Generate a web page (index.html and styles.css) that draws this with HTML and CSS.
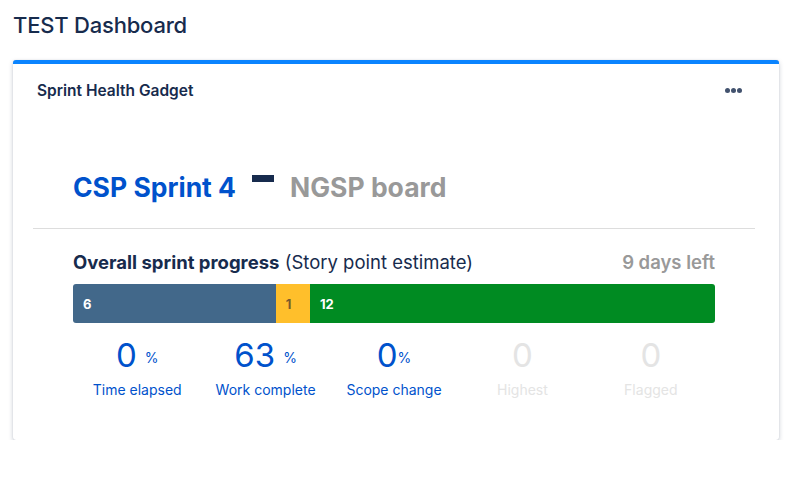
FILE: index.html
```html
<!DOCTYPE html>
<html lang="en">

<head>
    <meta charset="UTF-8">
    <meta name="viewport" content="width=device-width, initial-scale=1.0">
    <title>TEST Dashboard</title>
    <link rel="stylesheet" href="styles.css">
</head>

<body>
    <h1 class="page-title">TEST Dashboard</h1>

    <div class="gadget">
        <div class="gadget-head">
            <span class="gadget-title">Sprint Health Gadget</span>
            <span class="more">
                <i></i><i></i><i></i>
            </span>
        </div>

        <div class="sprint-name">
            <span class="sprint">CSP Sprint 4</span>
            <span class="dash"></span>
            <span class="board">NGSP board</span>
        </div>

        <div class="rule"></div>

        <div class="progress">
            <div class="progress-head">
                <div><b>Overall sprint progress</b> (Story point estimate)</div>
                <div class="days">9 days left</div>
            </div>

            <div class="bar">
                <div class="seg todo" style="width: 31.6%">6</div>
                <div class="seg inprog" style="width: 5.3%">1</div>
                <div class="seg done" style="width: 63.1%">12</div>
            </div>

            <div class="stats">
                <div class="stat">
                    <div class="num">0<sup>%</sup></div>
                    <div class="label">Time elapsed</div>
                </div>
                <div class="stat">
                    <div class="num">63<sup>%</sup></div>
                    <div class="label">Work complete</div>
                </div>
                <div class="stat">
                    <div class="num">0<sup class="tight">%</sup></div>
                    <div class="label">Scope change</div>
                </div>
                <div class="stat off">
                    <div class="num">0</div>
                    <div class="label">Highest</div>
                </div>
                <div class="stat off">
                    <div class="num">0</div>
                    <div class="label">Flagged</div>
                </div>
            </div>
        </div>
    </div>
</body>

</html>
```

FILE: styles.css
```css
* {
    padding: 0;
    margin: 0;
    box-sizing: border-box;
}

body {
    font-family: Inter, "Liberation Sans", sans-serif;
    color: #172b4d;
    background: #fff;
    padding: 12px 30px 0 13px;
}

.page-title {
    font-size: 22px;
    font-weight: 500;
    line-height: 26px;
    letter-spacing: -0.2px;
}

.gadget {
    margin-top: 22px;
    border-top: 4px solid #0a84ff;
    border-radius: 3px;
    background: #fff;
    box-shadow: 0 2px 5px rgba(9, 30, 66, 0.22), 0 0 1px rgba(9, 30, 66, 0.2);
    padding: 0 24px 41px 20px;
}

.gadget-head {
    display: flex;
    justify-content: space-between;
    align-items: center;
    height: 50px;
    padding-left: 4px;
    padding-top: 2px;
}

.gadget-title {
    font-size: 15.5px;
    font-weight: 600;
}

.more {
    display: flex;
    gap: 1px;
    margin-right: 13px;
}

.more i {
    width: 5px;
    height: 5px;
    border-radius: 50%;
    background: #42526e;
}

.sprint-name {
    display: flex;
    align-items: flex-start;
    padding: 57px 0 0 40px;
    height: 114px;
    font-size: 26.5px;
    line-height: 32px;
    font-weight: 700;
}

.sprint {
    color: #0052cc;
}

.dash {
    width: 22px;
    height: 7px;
    background: #172b4d;
    margin: 4px 16px 0 16px;
}

.board {
    color: #999;
}

.rule {
    height: 1px;
    background: #ddd;
}

.progress {
    padding: 22px 40px 0 40px;
}

.progress-head {
    display: flex;
    justify-content: space-between;
    font-size: 18.5px;
    line-height: 22px;
}

.progress-head b {
    font-weight: 700;
}

.days {
    color: #999;
    font-weight: 600;
}

.bar {
    display: flex;
    height: 39px;
    margin-top: 11px;
    border-radius: 3px;
    overflow: hidden;
    font-size: 13px;
    font-weight: 700;
    color: #fff;
}

.seg {
    display: flex;
    align-items: center;
    padding-left: 10px;
}

.todo {
    background: #42688a;
}

.inprog {
    background: #ffbf2b;
    color: #7a5a2b;
}

.done {
    background: #008b22;
}

.stats {
    display: flex;
    margin-top: 12px;
}

.stat {
    flex: 1;
    text-align: center;
    color: #0052cc;
}

.num {
    font-size: 33px;
    line-height: 40px;
}

.num sup {
    font-size: 14px;
    vertical-align: top;
    position: relative;
    top: 3px;
    margin-left: 8px;
}

.num sup.tight {
    margin-left: 0;
}

.label {
    font-size: 14px;
    line-height: 18px;
    margin-top: 6px;
}

.stat.off {
    color: #e4e4e4;
}
```
